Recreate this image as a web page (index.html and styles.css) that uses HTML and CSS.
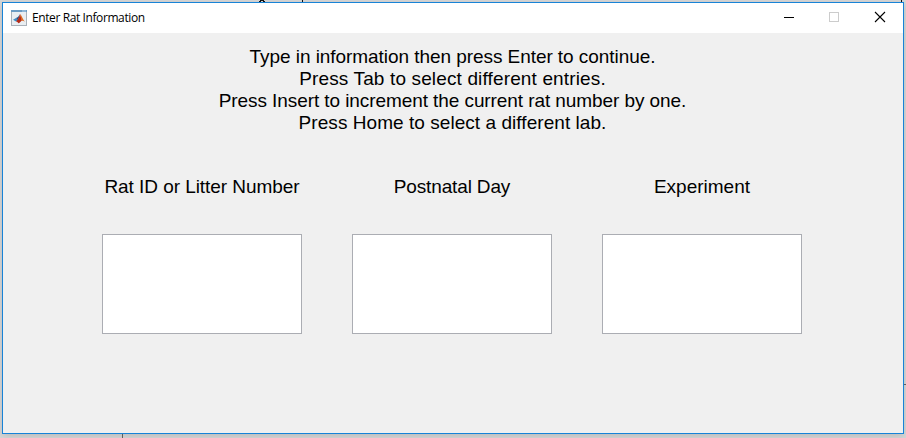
FILE: index.html
```
<!DOCTYPE html>
<html lang="en">
<head>
<meta charset="utf-8">
<title>Enter Rat Information</title>
<link rel="stylesheet" href="styles.css">
</head>
<body>
<svg class="backdrop" width="906" height="438" shape-rendering="crispEdges" aria-hidden="true">
  <path d="M259 1h2v1h-2zM260 0h4v1h-4zM263 1h2v1h-2zM302 0h1v2h-1zM901 0h1v2h-1z" fill="#111"/>
  <path d="M122 434h1v4h-1zM904 384h2v1h-2z" fill="#666"/>
</svg>
<main class="window">
  <header class="titlebar">
    <svg class="app-icon" width="16" height="16" viewBox="0 0 16 16">
      <rect x=".5" y=".5" width="15" height="15" fill="#e9eef2" stroke="#a9b1b9"/>
      <path d="M0 0h16v2H0z" fill="#6b9cc4"/>
      <path d="M11 1h4" stroke="#b6d2e8"/>
      <path d="M2 9.7 5 8l2 2.2-2 1.3z" fill="#3f8bc4"/>
      <path d="M5 8 7 7l2-2.8L7 10.2z" fill="#244f87"/>
      <path d="M9 4C8.3 6.5 7.5 9 5 11.5c1.5 0 2 1.5 2.8 1.8C9.3 12.5 10 11 11 10.3z" fill="#b52b19"/>
      <path d="M9 4c1.6 1.2 2.5 5 4.8 7.7-1.4-1-2.4-1.4-3.2-.6z" fill="#df6b20"/>
    </svg>
    <h1 class="title">Enter Rat Information</h1>
    <svg class="controls" width="138" height="30" viewBox="0 0 138 30">
      <path d="M19 14.5h10" stroke="#000" shape-rendering="crispEdges"/>
      <rect x="64.5" y="9.5" width="9" height="9" fill="none" stroke="#ccc" shape-rendering="crispEdges"/>
      <path d="m110 9 10 10M120 9l-10 10" stroke="#000" stroke-width="1.1"/>
    </svg>
  </header>
  <section class="instructions">
    <p class="line-type">Type in information then press Enter to continue.</p>
    <p class="line-tab">Press Tab to select different entries.</p>
    <p class="line-insert">Press Insert to increment the current rat number by one.</p>
    <p class="line-home">Press Home to select a different lab.</p>
  </section>
  <form class="fields">
    <label class="field"><span class="label-id">Rat ID or Litter Number</span><input type="text"></label>
    <label class="field"><span class="label-day">Postnatal Day</span><input type="text"></label>
    <label class="field"><span>Experiment</span><input type="text"></label>
  </form>
</main>
</body>
</html>
```
FILE: styles.css
```
* { box-sizing: border-box; }
body {
  margin: 0;
  padding: 2px;
  width: 906px;
  height: 438px;
  overflow: hidden;
  background: #d8d8d8;
  font-family: "Liberation Sans", Arial, sans-serif;
  color: #000;
}
.backdrop { position: absolute; left: 0; top: 0; }
.window {
  position: relative;
  width: 902px;
  height: 432px;
  border: 1px solid #1883d7;
  background: #f0f0f0;
  box-shadow: 0 2px 8px rgba(0, 0, 0, .15);
}
.titlebar {
  display: flex;
  align-items: center;
  height: 30px;
  padding-left: 8px;
  background: #fff;
}
.title {
  margin: 0 0 0 5px;
  font: 400 12px/16px "Open Sans", "Noto Sans", sans-serif;
  letter-spacing: -.4px;
}
.controls { margin-left: auto; }
.instructions {
  padding-top: 13px;
  text-align: center;
  font-size: 19px;
  line-height: 22px;
}
.instructions p { margin: 0; padding-right: 1px; white-space: nowrap; }
.line-type { letter-spacing: -.06px; }
.line-tab { letter-spacing: .14px; }
.line-insert { letter-spacing: -.08px; }
.line-home { letter-spacing: .05px; }
.label-id { letter-spacing: -.05px; }
.label-day { letter-spacing: -.15px; }
.fields {
  display: flex;
  gap: 50px;
  margin: 42px 0 0 99px;
}
.field {
  display: flex;
  flex-direction: column;
  align-items: center;
  width: 200px;
  font-size: 19px;
  line-height: 22px;
  white-space: nowrap;
}
.field input {
  width: 200px;
  height: 100px;
  margin: 36px 0 0;
  padding: 4px;
  border: 1px solid #abadb3;
  border-radius: 0;
  background: #fff;
  font: inherit;
  text-align: center;
  outline: none;
}
```
